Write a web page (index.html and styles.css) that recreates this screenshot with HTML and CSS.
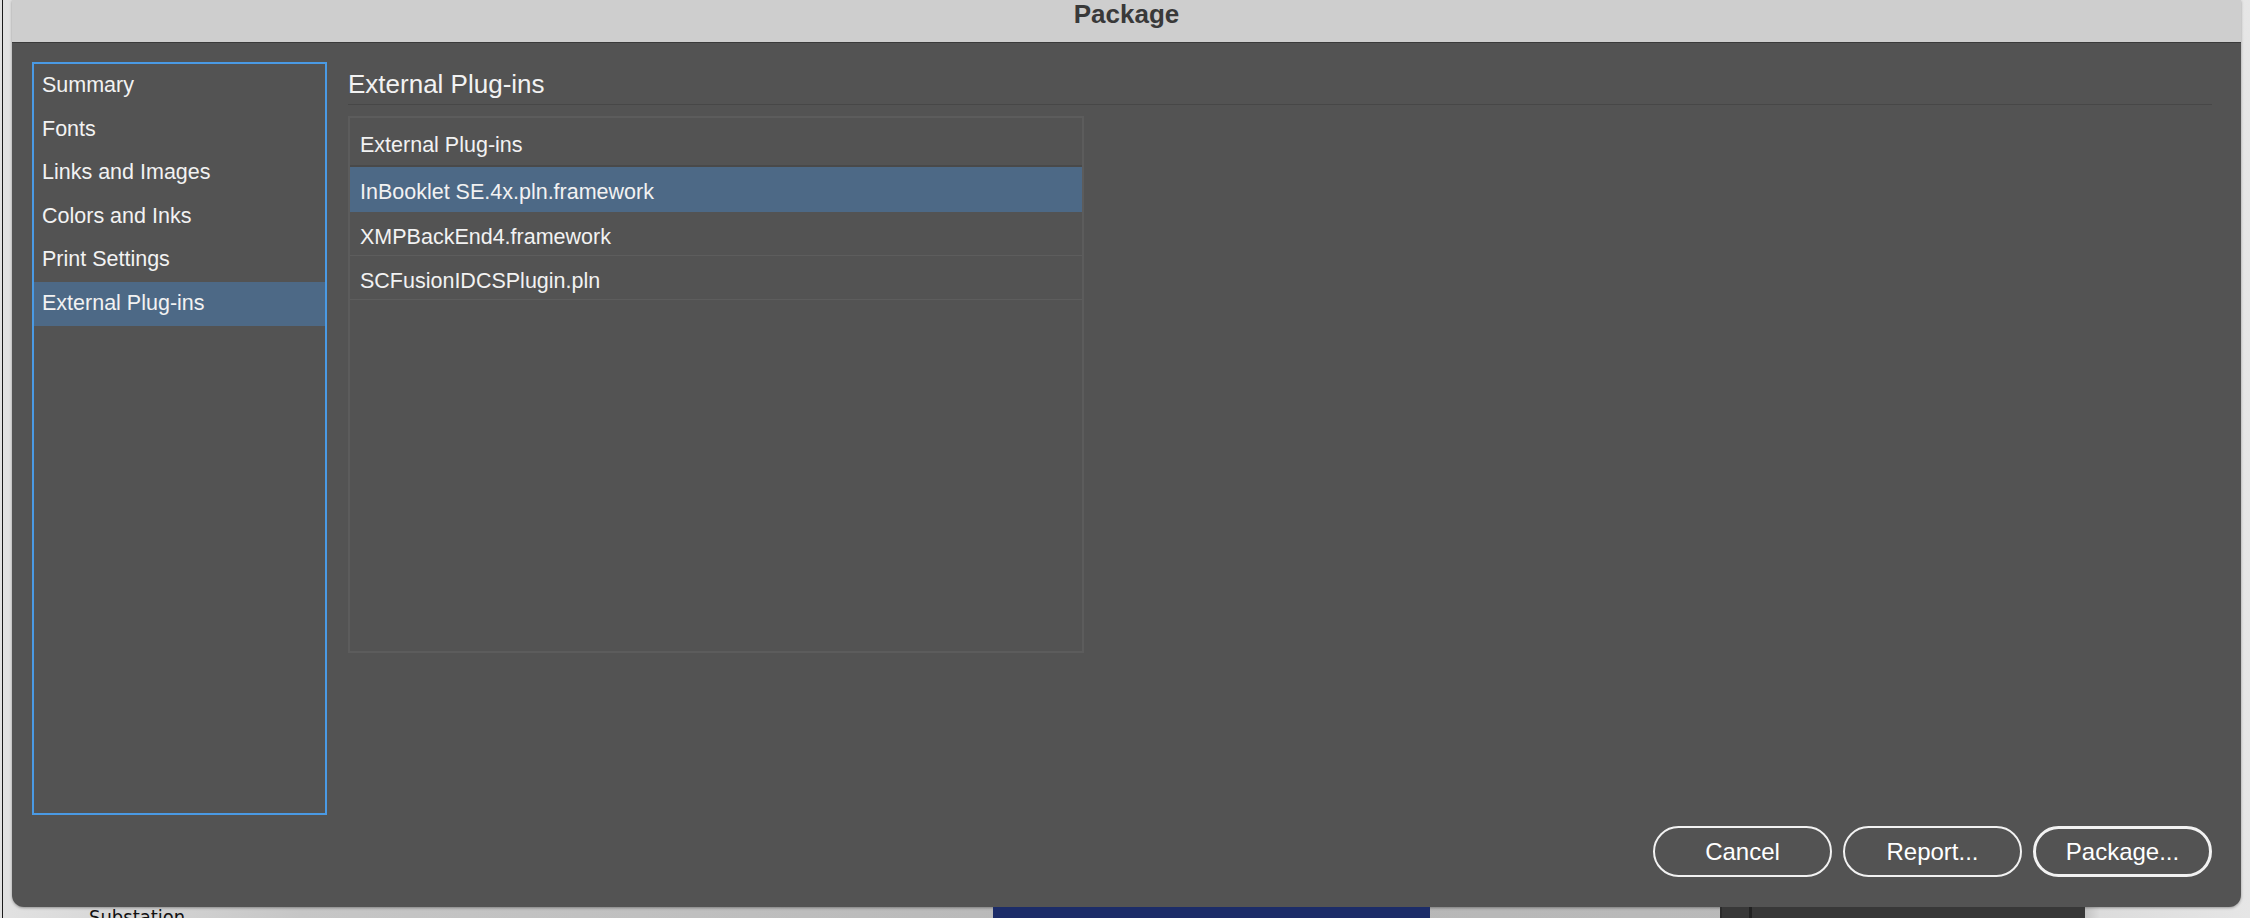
FILE: index.html
```html
<!DOCTYPE html>
<html lang="en">
<head>
    <meta charset="UTF-8">
    <meta name="viewport" content="width=device-width, initial-scale=1.0">
    <title>Package</title>
    <link rel="stylesheet" href="styles.css">
</head>
<body>

    <div class="desktop">
        <div class="edge"></div>

        <div class="stack">
            <div class="dialog">
                <div class="titlebar">Package</div>

                <div class="content">
                    <div class="panes">
                        <ul class="sidebar">
                            <li class="nav-item">Summary</li>
                            <li class="nav-item">Fonts</li>
                            <li class="nav-item">Links and Images</li>
                            <li class="nav-item">Colors and Inks</li>
                            <li class="nav-item">Print Settings</li>
                            <li class="nav-item active">External Plug-ins</li>
                        </ul>

                        <div class="main">
                            <h2>External Plug-ins</h2>
                            <div class="plugin-table">
                                <div class="table-head">External Plug-ins</div>
                                <div class="table-row selected">InBooklet SE.4x.pln.framework</div>
                                <div class="table-row">XMPBackEnd4.framework</div>
                                <div class="table-row">SCFusionIDCSPlugin.pln</div>
                            </div>
                        </div>
                    </div>

                    <div class="actions">
                        <button class="btn">Cancel</button>
                        <button class="btn">Report...</button>
                        <button class="btn default">Package...</button>
                    </div>
                </div>
            </div>

            <!-- bits of the document showing below the dialog -->
            <div class="doc-strip">
                <span class="doc-label">Substation</span>
                <span class="doc-block blue"></span>
                <span class="doc-block dark"></span>
            </div>
        </div>
    </div>

</body>
</html>
```

FILE: styles.css
```css
body {
    margin: 0;
    width: 2250px;
    height: 918px;
    overflow: hidden;
    background: linear-gradient(90deg, #e2e2e2 0, #c6c6c6 300px, #b6b6b6 1200px, #bcbcbc 2080px, #dcdcdc 2100px, #e6e6e6 2250px);
    font-family: "Liberation Sans", Arial, sans-serif;
}
.desktop {
    display: flex;
    height: 918px;
}
.edge {
    width: 9px;
    margin-left: 2px;
    border-left: 1px solid #1c1c1c;
}
.stack {
    display: flex;
    flex-direction: column;
}
.dialog {
    width: 2229px;
    height: 907px;
    background-color: #535353;
    border-radius: 0 0 12px 12px;
    box-shadow: 0 1px 3px rgba(0, 0, 0, 0.35);
    display: flex;
    flex-direction: column;
}
.titlebar {
    height: 41px;
    padding-top: 1px;
    background-color: #cecece;
    border-bottom: 1px solid #3a3a3a;
    text-align: center;
    font-size: 26px;
    line-height: 26px;
    font-weight: bold;
    color: #393939;
}
.content {
    flex: 1;
    display: flex;
    flex-direction: column;
    padding: 19px 29px 30px 20px;
}
.panes {
    display: flex;
    height: 753px;
}
.sidebar {
    width: 295px;
    box-sizing: border-box;
    margin: 0;
    padding: 0;
    list-style-type: none;
    border: 2px solid #4a9ae4;
}
.nav-item {
    height: 43.6px;
    line-height: 43.6px;
    padding-left: 8px;
    font-size: 21.5px;
    color: #f2f2f2;
}
.nav-item.active {
    background-color: #4d6986;
}
.main {
    flex: 1;
    margin-left: 21px;
    padding-top: 7px;
}
.main h2 {
    margin: 0;
    padding-bottom: 5px;
    border-bottom: 1px solid #474747;
    font-size: 26px;
    line-height: 30px;
    font-weight: normal;
    color: #f2f2f2;
}
.plugin-table {
    margin-top: 11px;
    width: 736px;
    height: 537px;
    box-sizing: border-box;
    border: 2px solid #5c5c5c;
}
.table-head {
    height: 32px;
    padding: 15px 0 0 10px;
    border-bottom: 2px solid #494949;
    font-size: 21.5px;
    line-height: 24px;
    color: #f2f2f2;
}
.table-row {
    box-sizing: border-box;
    height: 44px;
    padding: 13px 0 0 10px;
    border-bottom: 1px solid #5d5d5d;
    font-size: 21.5px;
    line-height: 24px;
    color: #f2f2f2;
}
.table-row.selected {
    height: 45px;
    background-color: #4d6986;
    border-bottom-color: #4d6986;
}
.actions {
    display: flex;
    justify-content: flex-end;
    gap: 11px;
    margin-top: 11px;
}
.btn {
    width: 179px;
    height: 51px;
    box-sizing: border-box;
    padding: 0;
    border: 2px solid #f2f2f2;
    border-radius: 26px;
    background-color: transparent;
    color: white;
    font-family: inherit;
    font-size: 24px;
}
.btn.default {
    border-width: 3.5px;
}
.doc-strip {
    display: flex;
    height: 11px;
    overflow: hidden;
}
.doc-label {
    width: 120px;
    margin-left: 77px;
    font-family: "DejaVu Sans", sans-serif;
    font-stretch: condensed;
    font-size: 20px;
    line-height: 20px;
    color: #111;
}
.doc-block {
    height: 11px;
}
.doc-block.blue {
    width: 437px;
    margin-left: 784px;
    background-color: #1c2c68;
}
.doc-block.dark {
    width: 365px;
    margin-left: 290px;
    background: linear-gradient(90deg, #2c2c2c 0, #2c2c2c 2px, #383838 2px, #383838 29px, #222 29px, #222 32px, #383838 32px);
}
```
